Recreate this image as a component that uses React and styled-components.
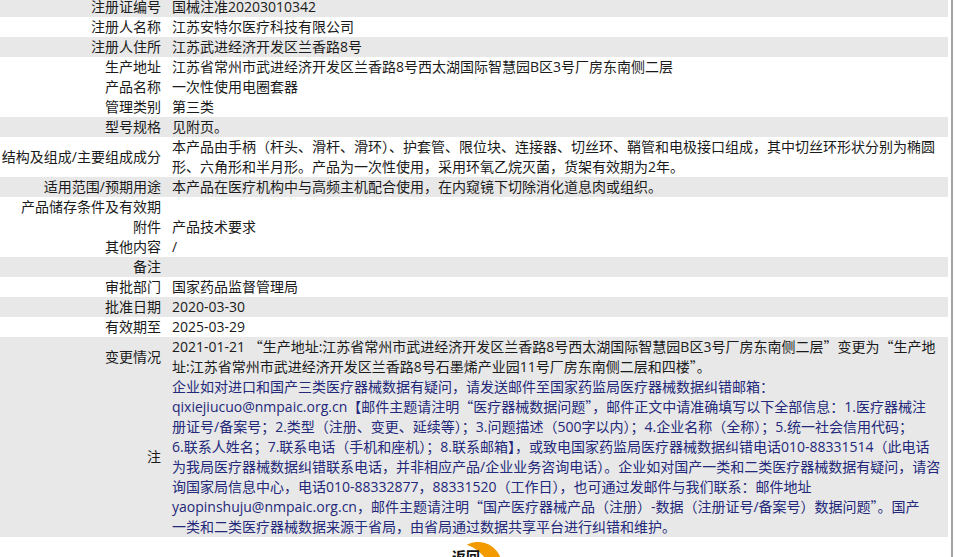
import React from "react";
import styled, { createGlobalStyle } from "styled-components";

const GlobalStyle = createGlobalStyle`
  html, body {
    margin: 0;
    padding: 0;
    background: #fff;
  }
  body {
    font-family: "Open Sans", "Noto Sans CJK SC", sans-serif;
    font-size: 14px;
    color: #1a1a1a;
  }
`;

const Page = styled.div`
  width: 951px;
  min-height: 100vh;
  border-right: 2px solid #a3a3a3;
  overflow: hidden;
`;

const Table = styled.table`
  width: 948px;
  margin-top: -3px;
  border-collapse: collapse;
  table-layout: fixed;
`;

const Row = styled.tr`
  background: ${(p) => (p.$shade ? "#e8e8e8" : "#ffffff")};
`;

const Label = styled.td`
  width: 161px;
  padding: 0 5px 0 0;
  text-align: right;
  white-space: nowrap;
  vertical-align: middle;
  line-height: 20px;
  height: 20px;
`;

const Value = styled.td`
  padding: 0 4px 0 6px;
  vertical-align: middle;
  line-height: 20px;
  height: 20px;
  color: ${(p) => p.$tone || "#1a1a1a"};
`;

const Line = styled.span`
  display: block;
  height: 20px;
  line-height: 20px;
  white-space: nowrap;
`;

const Quote = styled.span`
  font-family: "Noto Sans CJK SC", sans-serif;
  line-height: 1;
`;

const Footer = styled.div`
  display: flex;
  justify-content: center;
  padding: 9px 0 30px;
  width: 948px;
`;

const BackButton = styled.button`
  position: relative;
  border: 0;
  background: transparent;
  padding: 0;
  width: 60px;
  height: 40px;
  cursor: pointer;
  font-family: "Noto Sans CJK SC", sans-serif;
  font-size: 14px;
  font-weight: bold;
  color: #111;
  align-self: flex-start;
`;

const Arc = styled.svg`
  position: absolute;
  left: 4px;
  top: -5px;
`;

const BackText = styled.span`
  position: absolute;
  left: 8px;
  top: 0;
  line-height: 20px;
`;

const rows = [
  { k: "注册证编号", v: "国械注准20203010342", shade: true },
  { k: "注册人名称", v: "江苏安特尔医疗科技有限公司" },
  { k: "注册人住所", v: "江苏武进经济开发区兰香路8号", shade: true },
  { k: "生产地址", v: "江苏省常州市武进经济开发区兰香路8号西太湖国际智慧园B区3号厂房东南侧二层" },
  { k: "产品名称", v: "一次性使用电圈套器" },
  { k: "管理类别", v: "第三类" },
  { k: "型号规格", v: "见附页。", shade: true },
  {
    k: "结构及组成/主要组成成分",
    lines: [
      "本产品由手柄（杆头、滑杆、滑环）、护套管、限位块、连接器、切丝环、鞘管和电极接口组成，其中切丝环形状分别为椭圆",
      "形、六角形和半月形。产品为一次性使用，采用环氧乙烷灭菌，货架有效期为2年。",
    ],
  },
  { k: "适用范围/预期用途", v: "本产品在医疗机构中与高频主机配合使用，在内窥镜下切除消化道息肉或组织。", shade: true },
  { k: "产品储存条件及有效期", v: "" },
  { k: "附件", v: "产品技术要求" },
  { k: "其他内容", v: "/" },
  { k: "备注", v: "", shade: true },
  { k: "审批部门", v: "国家药品监督管理局" },
  { k: "批准日期", v: "2020-03-30", shade: true },
  { k: "有效期至", v: "2025-03-29" },
];

const q = (s) => <Quote>{s}</Quote>;

const ChangeText = () => (
  <>
    <Line>
      2021-01-21 {q("“")}生产地址:江苏省常州市武进经济开发区兰香路8号西太湖国际智慧园B区3号厂房东南侧二层{q("”")}变更为{q("“")}生产地
    </Line>
    <Line>址:江苏省常州市武进经济开发区兰香路8号石墨烯产业园11号厂房东南侧二层和四楼{q("”")}。</Line>
  </>
);

const NoteText = () => (
  <>
    <Line>企业如对进口和国产三类医疗器械数据有疑问，请发送邮件至国家药监局医疗器械数据纠错邮箱：</Line>
    <Line>
      qixiejiucuo@nmpaic.org.cn【邮件主题请注明{q("“")}医疗器械数据问题{q("”")}，邮件正文中请准确填写以下全部信息：1.医疗器械注
    </Line>
    <Line>册证号/备案号；2.类型（注册、变更、延续等）；3.问题描述（500字以内）；4.企业名称（全称）；5.统一社会信用代码；</Line>
    <Line>6.联系人姓名；7.联系电话（手机和座机）；8.联系邮箱】，或致电国家药监局医疗器械数据纠错电话010-88331514（此电话</Line>
    <Line>为我局医疗器械数据纠错联系电话，并非相应产品/企业业务咨询电话）。企业如对国产一类和二类医疗器械数据有疑问，请咨</Line>
    <Line>询国家局信息中心，电话010-88332877，88331520（工作日），也可通过发邮件与我们联系：邮件地址</Line>
    <Line>
      yaopinshuju@nmpaic.org.cn，邮件主题请注明{q("“")}国产医疗器械产品（注册）-数据（注册证号/备案号）数据问题{q("”")}。国产
    </Line>
    <Line>一类和二类医疗器械数据来源于省局，由省局通过数据共享平台进行纠错和维护。</Line>
  </>
);

const App = () => {
  return (
    <Page>
      <GlobalStyle />
      <Table>
        <tbody>
          {rows.map((r) => (
            <Row key={r.k} $shade={r.shade}>
              <Label>{r.k}</Label>
              <Value>
                {r.lines ? r.lines.map((l) => <Line key={l}>{l}</Line>) : r.v}
              </Value>
            </Row>
          ))}
          <Row $shade>
            <Label>变更情况</Label>
            <Value>
              <ChangeText />
            </Value>
          </Row>
          <Row $shade>
            <Label>注</Label>
            <Value $tone="#23287a">
              <NoteText />
            </Value>
          </Row>
        </tbody>
      </Table>
      <Footer>
        <BackButton type="button">
          <Arc width="60" height="50" viewBox="0 0 60 50">
            <path
              d="M30 1 A24 24 0 1 1 30 49 A34 34 0 0 0 30 1 Z"
              fill="#f29a00"
              transform="rotate(-28 30 25)"
            />
          </Arc>
          <BackText>返回</BackText>
        </BackButton>
      </Footer>
    </Page>
  );
};

export default App;
